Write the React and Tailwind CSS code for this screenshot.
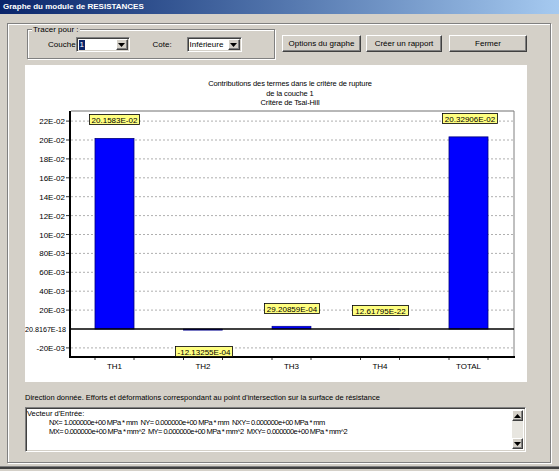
import React from "react";

const raised =
  "bg-[#d4d0c8] border border-t-white border-l-white border-b-[#404040] border-r-[#404040] shadow-[inset_-1px_-1px_0_#808080]";
const sunken =
  "border border-t-[#808080] border-l-[#808080] border-b-white border-r-white shadow-[inset_1px_1px_0_#404040,inset_-1px_-1px_0_#d4d0c8]";

function Arrow({ up }) {
  return (
    <svg width="7" height="4" viewBox="0 0 7 4">
      <polygon points={up ? "0,4 7,4 3.5,0" : "0,0 7,0 3.5,4"} fill="#000" />
    </svg>
  );
}

function Combo({ width, children }) {
  return (
    <div className={`${sunken} bg-white h-[15px] flex items-center ${width}`}>
      <div className="flex-1 pl-[2px] leading-none text-[8px] flex items-center">{children}</div>
      <div className={`${raised} w-[12px] h-[11px] mr-[1px] flex items-center justify-center`}>
        <Arrow />
      </div>
    </div>
  );
}

function Button({ label, width, className = "" }) {
  return (
    <div
      className={`${raised} h-[17px] ${width} ${className} flex items-center justify-center text-[8px] leading-none`}
    >
      {label}
    </div>
  );
}

const ticks = [
  [0.22, "22E-02"],
  [0.2, "20E-02"],
  [0.18, "18E-02"],
  [0.16, "16E-02"],
  [0.14, "14E-02"],
  [0.12, "12E-02"],
  [0.1, "10E-02"],
  [0.08, "80E-03"],
  [0.06, "60E-03"],
  [0.04, "40E-03"],
  [0.02, "20E-03"],
  [-0.02, "-20E-03"],
];

const bars = [
  { name: "TH1", x: 70, v: 0.201583, label: "20.1583E-02", lx: 64, ly: 49, lw: 50 },
  { name: "TH2", x: 158.5, v: -0.001213255, label: "-12.13255E-04", lx: 150, ly: 281, lw: 57 },
  { name: "TH3", x: 247, v: 0.002920859, label: "29.20859E-04", lx: 239, ly: 238, lw: 55 },
  { name: "TH4", x: 335.5, v: 0, label: "12.61795E-22", lx: 327, ly: 240, lw: 56 },
  { name: "TOTAL", x: 424, v: 0.2032906, label: "20.32906E-02", lx: 417, ly: 48, lw: 55 },
];

const zero = 264;
const k = 945;
const yOf = (v) => zero - v * k;

function Chart() {
  return (
    <svg width="502" height="317" viewBox="0 0 502 317" fontFamily="'Liberation Sans', Arial, sans-serif">
      <g fontSize="7.5" fill="#000" textAnchor="middle" letterSpacing="-0.1">
        <text x="265" y="21">Contributions des termes dans le critère de rupture</text>
        <text x="265" y="31">de la couche 1</text>
        <text x="265" y="40">Critère de Tsai-Hill</text>
      </g>
      {ticks.map(([v, t]) => (
        <g key={t}>
          <line x1="46" x2="489" y1={yOf(v)} y2={yOf(v)} stroke="#9a9a9a" strokeWidth="0.8" strokeDasharray="2 2" />
          <line x1="41" x2="45" y1={yOf(v)} y2={yOf(v)} stroke="#000" strokeWidth="0.8" />
          <text x="40" y={yOf(v) + 3} fontSize="8" textAnchor="end">
            {t}
          </text>
        </g>
      ))}
      <text x="0" y={zero + 3} fontSize="8" textLength="41" lengthAdjust="spacingAndGlyphs">
        20.8167E-18
      </text>
      <line x1="46" x2="489" y1="46" y2="46" stroke="#707070" strokeWidth="1" />
      <line x1="489" x2="489" y1="46" y2="292" stroke="#808080" strokeWidth="1" />
      {bars.map((b) => {
        const y = yOf(b.v);
        const top = Math.min(y, zero);
        const h = Math.max(Math.abs(y - zero), 0.01);
        return (
          <g key={b.name}>
            <rect x={b.x} y={top} width="39" height={h} fill="#0000ff" stroke="#00007a" strokeWidth={h > 3 ? 0.8 : 0.6} />
            <text x={b.x + 19.5} y="304" fontSize="8" textAnchor="middle">
              {b.name}
            </text>
          </g>
        );
      })}
      <line x1="45" x2="489" y1={zero} y2={zero} stroke="#000" strokeWidth="1.4" />
      <line x1="45" x2="45" y1="46" y2="293" stroke="#000" strokeWidth="2" />
      <line x1="44" x2="490" y1="292" y2="292" stroke="#000" strokeWidth="2" />
      {[70, 109, 158.5, 197.5, 247, 286, 335.5, 374.5, 424, 463].map((x) => (
        <line key={x} x1={x} x2={x} y1="293" y2="295" stroke="#000" strokeWidth="0.8" />
      ))}
      {bars.map((b) => (
        <g key={b.label}>
          <rect x={b.lx + 0.5} y={b.ly + 0.5} width={b.lw} height="10" fill="#ffff80" stroke="#000" strokeWidth="0.8" />
          <text x={b.lx + 0.5 + b.lw / 2} y={b.ly + 8.5} fontSize="8" textAnchor="middle">
            {b.label}
          </text>
        </g>
      ))}
    </svg>
  );
}

export default function App() {
  return (
    <div className="w-[559px] h-[471px] bg-[#d4d0c8] overflow-hidden flex flex-col font-['Liberation_Sans',Arial,sans-serif] text-[8px] text-black">
      <div className="h-[14px] shrink-0 bg-gradient-to-r from-[#0a246a] to-[#a6caf0] flex items-center pl-[3px]">
        <span className="text-white font-bold text-[8px] leading-none">Graphe du module de RESISTANCES</span>
      </div>

      <div className="ml-[7px] mt-[9px] w-[544px] h-[440px] shrink-0 border border-[#808080] shadow-[inset_1px_1px_0_#fff,1px_1px_0_#fff] flex flex-col">
        <div className="flex pt-[5px] pl-[19px]">
          <div className="relative w-[248px] h-[30px] border border-[#808080] shadow-[inset_1px_1px_0_#fff,1px_1px_0_#fff] flex items-start pt-[7px] pl-[20px]">
            <span className="absolute -top-[5px] left-[4px] px-[1px] bg-[#d4d0c8] leading-[9px]">Tracer pour :</span>
            <span className="h-[15px] flex items-center leading-none">Couche</span>
            <Combo width="w-[54px]">
              <span className="bg-[#0a246a] text-white px-[1px] leading-[10px]">1</span>
            </Combo>
            <span className="h-[15px] flex items-center leading-none ml-[23px] w-[34px]">Cote:</span>
            <Combo width="w-[55px]">
              <span className="leading-none">Inférieure</span>
            </Combo>
          </div>
          <Button label="Options du graphe" width="w-[79px]" className="ml-[7px] mt-[6px]" />
          <Button label="Créer un rapport" width="w-[76px]" className="ml-[5px] mt-[6px]" />
          <Button label="Fermer" width="w-[78px]" className="ml-[7px] mt-[6px]" />
        </div>

        <div className="ml-[17px] mt-[6px] w-[502px] h-[317px] bg-white">
          <Chart />
        </div>

        <div className="ml-[17px] mt-[11px] leading-[10px] text-[7.5px]">
          Direction donnée. Efforts et déformations correspondant au point d'intersection sur la surface de résistance
        </div>

        <div className={`ml-[17px] mt-[4px] w-[501px] h-[45px] bg-white flex ${sunken}`}>
          <div className="flex-1 pl-[1px] pt-[1px] leading-[9px] whitespace-pre text-[7.5px]">
            <div>Vecteur d'Entrée:</div>
            <div className="pl-[22px] tracking-[-0.55px]">NX= 1.000000e+00 MPa * mm  NY= 0.000000e+00 MPa * mm  NXY= 0.000000e+00 MPa * mm</div>
            <div className="pl-[22px] tracking-[-0.55px]">MX= 0.000000e+00 MPa * mm^2  MY= 0.000000e+00 MPa * mm^2  MXY= 0.000000e+00 MPa * mm^2</div>
          </div>
          <div className="w-[11px] my-[2px] mr-[2px] flex flex-col bg-[#e8e6e0]">
            <div className={`${raised} h-[11px] flex items-center justify-center`}>
              <Arrow up />
            </div>
            <div className="flex-1" />
            <div className={`${raised} h-[11px] flex items-center justify-center`}>
              <Arrow />
            </div>
          </div>
        </div>
      </div>

      <div className="mt-[3px] h-[3px] shrink-0 border-t border-[#808080] bg-[#404040]" />
    </div>
  );
}
